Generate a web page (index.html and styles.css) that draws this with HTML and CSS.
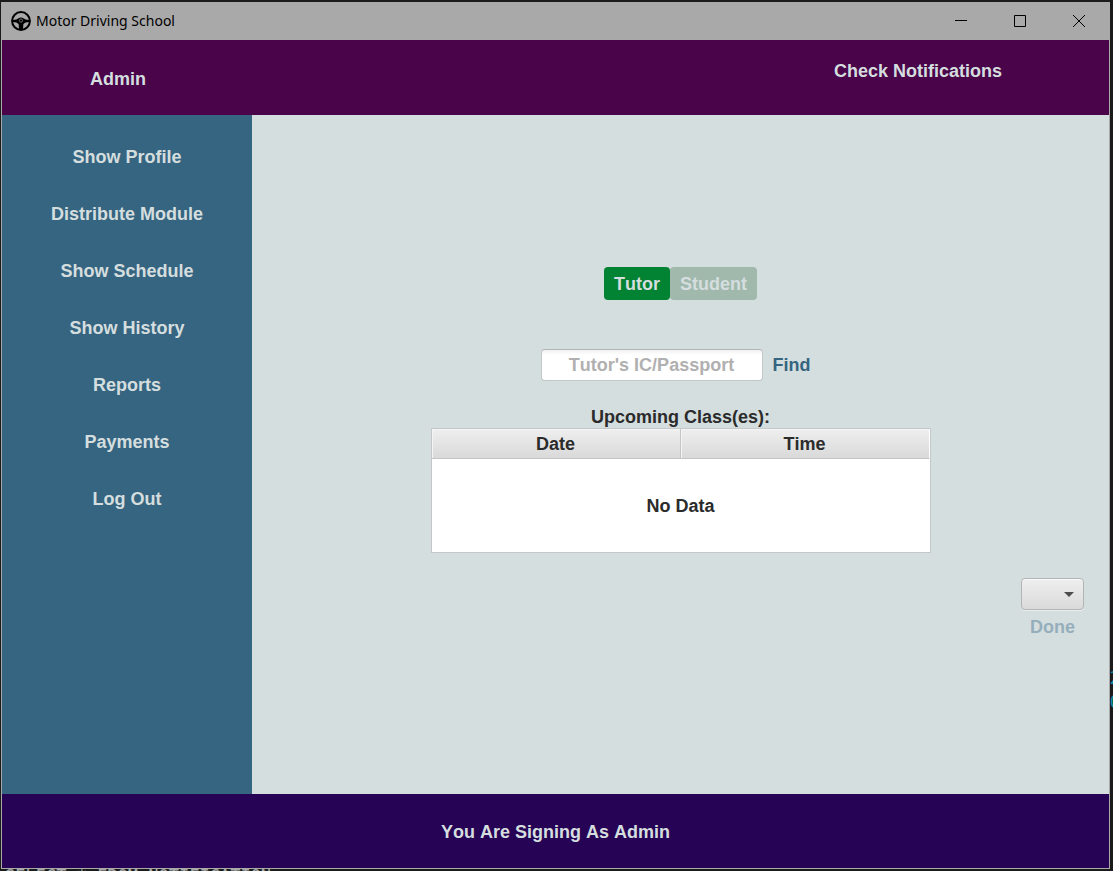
FILE: index.html
```html
<!DOCTYPE html>
<html lang="en">
<head>
<meta charset="utf-8">
<title>Motor Driving School</title>
<link rel="stylesheet" href="styles.css">
</head>
<body>
<div class="backdrop" aria-hidden="true">
  <div class="edge">2<br>0</div>
  <div class="query">SELECT * FROM NOTIFICATION;</div>
</div>
<div class="window">
  <header class="titlebar">
    <svg class="logo" viewBox="0 0 20 20" width="20" height="20" aria-hidden="true">
      <circle cx="10" cy="10" r="8.9" fill="none" stroke="#000" stroke-width="2"/>
      <path d="M2 9 Q6 8.6 7.6 7.2 Q10 6 12.4 7.2 Q14 8.6 18 9 L18 11 Q14 11 12.4 13 L12 18 H8 L7.6 13 Q6 11 2 11Z"/>
      <circle cx="10" cy="9.6" r="1.6" fill="none" stroke="#a9a9a9" stroke-width="0.6"/>
    </svg>
    <h1 class="title">Motor Driving School</h1>
    <button class="control" aria-label="Minimize"><svg width="12" height="12" viewBox="0 0 12 12"><path d="M0 5.5H12"/></svg></button>
    <button class="control" aria-label="Maximize"><svg width="12" height="12" viewBox="0 0 12 12"><path d="M.5 .5H11.5V11.5H.5Z"/></svg></button>
    <button class="control" aria-label="Close"><svg width="12" height="12" viewBox="0 0 12 12"><path d="M0 0L12 12M12 0L0 12"/></svg></button>
  </header>
  <div class="topbar">
    <div class="role">Admin</div>
    <button class="notify">Check Notifications</button>
  </div>
  <div class="body">
    <nav class="sidebar">
      <button>Show Profile</button>
      <button>Distribute Module</button>
      <button>Show Schedule</button>
      <button>Show History</button>
      <button>Reports</button>
      <button>Payments</button>
      <button>Log Out</button>
    </nav>
    <main class="content">
      <div class="toggle">
        <button class="tab">Tutor</button>
        <button class="tab tab-off" disabled>Student</button>
      </div>
      <form class="search">
        <input class="field" type="text" placeholder="Tutor's IC/Passport" aria-label="Tutor's IC/Passport">
        <button class="find" type="button">Find</button>
      </form>
      <table class="classes">
        <caption>Upcoming Class(es):</caption>
        <thead><tr><th>Date</th><th>Time</th></tr></thead>
        <tbody><tr><td colspan="2">No Data</td></tr></tbody>
      </table>
      <div class="actions">
        <div class="picker">
          <select aria-label="Class"><option></option></select>
          <svg class="arrow" width="10" height="5" viewBox="0 0 10 5" aria-hidden="true"><path d="M0 0H10L5 5Z" fill="#4d4d4d"/></svg>
        </div>
        <button class="done" disabled>Done</button>
      </div>
    </main>
  </div>
  <footer class="status">You Are Signing As Admin</footer>
</div>
</body>
</html>
```
FILE: styles.css
```css
* { box-sizing: border-box; }
body {
  margin: 0;
  padding: 2px 3px 2px 1px;
  min-height: 100vh;
  display: flex;
  position: relative;
  background: #1b1b1b;
  color: #2b2b2b;
  font: bold 18px/22px "Liberation Sans", Arial, sans-serif;
  font-kerning: none;
}
button {
  font: inherit;
  font-kerning: inherit;
  color: inherit;
  background: none;
  border: 0;
  padding: 0;
}
/* terminal lines that peek out around the window */
.backdrop {
  position: absolute;
  inset: 0;
  overflow: hidden;
  font: 17px/24px "DejaVu Sans Mono", monospace;
}
.edge {
  position: absolute;
  right: -7px;
  bottom: 157px;
  color: #0a8fae;
}
.query {
  position: absolute;
  left: 5px;
  bottom: -17px;
  color: #a9a9a9;
}
.window {
  flex: 1;
  display: flex;
  flex-direction: column;
  position: relative;
  border: 1px solid #a9a9a9;
}
.titlebar {
  display: flex;
  align-items: center;
  height: 37px;
  padding: 0 1px 1px 9px;
  background: #a9a9a9;
  color: #000;
}
.title {
  flex: 1;
  margin: 0 0 0 5px;
  font: 14px/20px "Noto Sans", sans-serif;
}
.control {
  display: flex;
  align-items: center;
  justify-content: center;
  width: 59px;
  height: 36px;
}
.control svg { fill: none; stroke: #000; }
.topbar {
  display: flex;
  justify-content: space-between;
  height: 75px;
  background: #4a044a;
  color: #d5dedf;
}
.role { padding: 28px 0 0 88px; }
.notify {
  align-self: flex-start;
  padding: 20px 107px 0 0;
}
.body { flex: 1; display: flex; }
.sidebar {
  width: 250px;
  display: flex;
  flex-direction: column;
  align-items: center;
  gap: 35px;
  padding-top: 31px;
  background: #356580;
  color: #d5dedf;
}
.content {
  flex: 1;
  display: flex;
  flex-direction: column;
  align-items: center;
  justify-content: center;
  padding-bottom: 5px;
  background: #d5dedf;
}
.toggle { display: flex; }
.tab {
  height: 33px;
  padding: 1px 10px 0;
  border-radius: 4px;
  background: #028233;
  color: #d5dedf;
}
.tab-off { background: #a1b8ac; }
.search {
  display: flex;
  align-items: center;
  gap: 10px;
  margin: 49px 10px 0 0;
}
.field {
  width: 222px;
  height: 32px;
  padding: 2px 2px 0;
  border: 1px solid #c3c7c8;
  border-top-color: #b2b5b5;
  border-radius: 4px;
  background: linear-gradient(#f1f1f1, #fff 5px);
  font: inherit;
  font-kerning: inherit;
  text-align: center;
}
.field::placeholder { color: #b0b0b0; opacity: 1; }
.find { color: #356580; }
.classes {
  width: 500px;
  margin-top: 26px;
  border-spacing: 0;
  border: 1px solid #c5c8c8;
  background: #fff;
  table-layout: fixed;
}
.classes caption { line-height: 21px; }
.classes th {
  height: 30px;
  padding: 1px 0 0;
  border-right: 1px solid #c5c5c5;
  border-bottom: 1px solid #c5c5c5;
  background: linear-gradient(#efefef, #d9d9d9);
  box-shadow: inset 1px 1px #f4f4f4;
}
.classes th:last-child { border-right-color: #fff; }
.classes td {
  height: 93px;
  padding: 2px 0 0;
  text-align: center;
}
.actions {
  align-self: flex-end;
  display: flex;
  flex-direction: column;
  align-items: center;
  gap: 6px;
  margin: 25px 25px 0 0;
}
.picker { position: relative; display: flex; }
.picker select {
  appearance: none;
  width: 63px;
  height: 32px;
  border: 1px solid #b3b5b5;
  border-radius: 4px;
  background: linear-gradient(#efefef, #dadada);
  box-shadow: 0 1px #e8edee, inset 0 1px #fafafa;
}
.arrow {
  position: absolute;
  right: 10px;
  top: 14px;
  pointer-events: none;
}
.done { color: #95aebb; }
.status {
  display: flex;
  align-items: center;
  justify-content: center;
  height: 74px;
  padding-top: 2px;
  background: #260355;
  color: #d5dedf;
}
```
